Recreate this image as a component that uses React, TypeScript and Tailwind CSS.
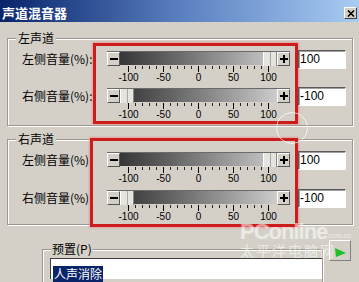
import React from "react";

const ticks = Array.from({ length: 21 }, (_, i) => i);
const scale = ["-100", "-50", "0", "50", "100"];

function StepBtn({ plus }: { plus?: boolean }) {
  return (
    <div className="relative w-[13px] h-[14px] shrink-0 bg-[#d4d0c8] border-t border-l border-t-white border-l-white border-b border-r border-b-[#555] border-r-[#555] flex items-center justify-center">
      <div className="w-[8px] h-[2px] bg-black" />
      {plus && <div className="absolute w-[2px] h-[8px] bg-black" />}
    </div>
  );
}

function Thumb() {
  return (
    <div className="w-[14px] h-[14px] shrink-0 bg-[#e6e4de] border-l border-l-white border-r border-r-[#8a8a8a] flex justify-center">
      <div className="w-px h-full bg-[#a8a8a8]" />
    </div>
  );
}

function Slider({ thumb, h }: { thumb: "left" | "right"; h: string }) {
  return (
    <div className={`w-[183px] ${h}`}>
      <div className="flex h-[14px] bg-gradient-to-r from-[#2c2c2c] to-[#dadada] border-t border-t-[#6a6a6a]">
        <StepBtn />
        {thumb === "left" && <Thumb />}
        <div className="flex-1" />
        {thumb === "right" && <Thumb />}
        <StepBtn plus />
      </div>
      <div className="ml-[21px] mt-[1px] w-[141px] flex justify-between items-start">
        {ticks.map((i) => (
          <div
            key={i}
            className={i % 5 === 0 ? "w-px h-[6px] bg-black" : "w-px h-[3px] bg-[#222]"}
          />
        ))}
      </div>
      <div className="ml-[4px] flex font-['Liberation_Sans',sans-serif] text-[10px] leading-[11px] text-black">
        {scale.map((s) => (
          <div key={s} className="w-[35px] text-center">
            {s}
          </div>
        ))}
      </div>
    </div>
  );
}

function Field({ value }: { value: string }) {
  return (
    <div className="w-[48px] h-[19px] bg-white border-t border-l border-t-[#5a5a5a] border-l-[#5a5a5a] border-b border-r border-b-white border-r-white shadow-[inset_1px_1px_0_#a0a0a0] font-['Liberation_Sans',sans-serif] text-[12px] leading-[17px] pl-[1px] text-black">
      {value}
    </div>
  );
}

function Legend({ children }: { children: React.ReactNode }) {
  return (
    <span className="absolute -top-[9px] left-[8px] bg-[#d4d0c8] px-[2px] text-[12px] leading-[16px] text-black">
      {children}
    </span>
  );
}

export default function App() {
  return (
    <div className="relative w-[359px] h-[282px] overflow-hidden bg-[#d4d0c8] font-['Noto_Sans_CJK_SC',sans-serif] text-black">
      {/* Title bar */}
      <div className="h-[22px] flex items-center justify-between pl-[2px] pr-[2px] pt-[4px] bg-gradient-to-r from-[#0a246a] via-[#5a7fc0] to-[#a9ccf2]">
        <span className="text-white font-bold text-[13px] leading-[14px]">声道混音器</span>
        <div className="w-[13px] h-[12px] bg-[#d4d0c8] border-t border-l border-t-white border-l-white border-b border-r border-b-[#404040] border-r-[#404040] flex items-center justify-center">
          <svg width="8" height="7" viewBox="0 0 8 7">
            <path d="M1 0.5 L7 6.5 M7 0.5 L1 6.5" stroke="#000" strokeWidth="1.6" />
          </svg>
        </div>
      </div>

      {/* 左声道 */}
      <div className="relative mt-[16px] ml-[7px] w-[346px] h-[88px] border border-[#9c988f] shadow-[inset_1px_1px_0_#fff,1px_1px_0_#fff]">
        <Legend>左声道</Legend>
        <div className="flex items-start pt-[4px]">
          <div className="w-[85px] pl-[14px] pt-[8px] flex flex-col gap-[22px] text-[12px] leading-[15px] whitespace-nowrap">
            <span>左侧音量(%):</span>
            <span>右侧音量(%):</span>
          </div>
          <div className="w-[205px] border-[3px] border-[#cc1d1d] shadow-[0_0_2px_1px_rgba(235,140,140,0.7)] pt-[5px] pl-[11px] pr-[5px] flex flex-col gap-[4px]">
            <Slider thumb="right" h="h-[33px]" />
            <Slider thumb="left" h="h-[33px]" />
          </div>
          <div className="pt-[7px] flex flex-col gap-[18px]">
            <Field value="100" />
            <Field value="-100" />
          </div>
        </div>
      </div>

      {/* 右声道 */}
      <div className="relative mt-[13px] ml-[7px] w-[346px] h-[86px] border border-[#9c988f] shadow-[inset_1px_1px_0_#fff,1px_1px_0_#fff]">
        <Legend>右声道</Legend>
        <div className="flex items-start">
          <div className="w-[82px] pl-[14px] pt-[12px] flex flex-col gap-[23px] text-[12px] leading-[15px] whitespace-nowrap">
            <span>左侧音量(%)</span>
            <span>右侧音量(%)</span>
          </div>
          <div className="-mt-[2px] w-[208px] border-[3px] border-[#cc1d1d] shadow-[0_0_2px_1px_rgba(235,140,140,0.7)] pt-[11px] pl-[14px] pr-[5px] flex flex-col gap-[4px]">
            <Slider thumb="right" h="h-[34px]" />
            <Slider thumb="left" h="h-[34px]" />
          </div>
          <div className="pt-[11px] flex flex-col gap-[19px]">
            <Field value="100" />
            <Field value="-100" />
          </div>
        </div>
      </div>

      {/* 预置 */}
      <div className="flex items-start mt-[24px]">
        <div className="relative ml-[42px] w-[281px] h-[40px] border border-[#9c988f] shadow-[inset_1px_1px_0_#fff,1px_1px_0_#fff]">
          <span className="absolute -top-[9px] left-[8px] bg-[#d4d0c8] px-[1px] text-[12px] leading-[16px]">预置(P)</span>
          <div className="mt-[8px] ml-[7px] h-[21px] w-[272px] bg-white border-t border-l border-t-[#404040] border-l-[#404040] pl-[2px] pt-[1px]">
            <span className="inline-block bg-[#0a246a] text-white text-[12px] leading-[16px] px-[1px]">人声消除</span>
          </div>
        </div>
        <div className="-mt-[9px] ml-[6px] w-[22px] h-[21px] bg-[#d4d0c8] border-t border-l border-t-white border-l-white border-b border-r border-b-[#808080] border-r-[#808080] flex items-end justify-end pr-[3px] pb-[2px]">
          <svg width="13" height="11" viewBox="0 0 13 11">
            <path d="M1 1 L12 6 L2 10 Z" fill="#1fbf2a" />
          </svg>
        </div>
      </div>

      {/* watermark */}
      <div className="absolute left-[276px] top-[112px] w-[32px] h-[32px] rounded-full border border-white/70" />
      <div className="absolute left-[240px] top-[222px] pointer-events-none text-white/55">
        <div className="flex items-end h-[20px]">
          <span className="font-['Liberation_Sans',sans-serif] font-bold text-[22px] leading-[20px] tracking-[-1px]">PConline</span>
          <span className="font-['Liberation_Sans',sans-serif] text-[7px] leading-[7px] mb-[3px] ml-[1px]">com.cn</span>
        </div>
        <div className="text-[14px] leading-[14px] tracking-[2px] mt-[1px]">太平洋电脑网</div>
      </div>
    </div>
  );
}
